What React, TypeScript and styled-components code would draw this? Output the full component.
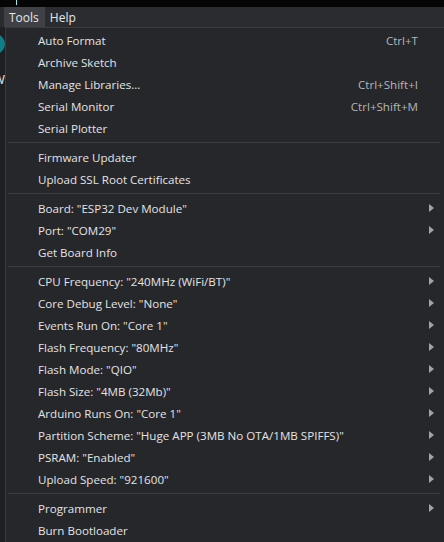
import React from "react";
import styled, { createGlobalStyle } from "styled-components";

const GlobalStyle = createGlobalStyle`
  html, body {
    margin: 0;
    padding: 0;
    background: #1e1f22;
    overflow: hidden;
  }
  body {
    font-family: "Segoe UI", "Open Sans", "Noto Sans", sans-serif;
  }
`;

const Screen = styled.div`
  width: 444px;
  height: 542px;
  display: flex;
  flex-direction: column;
  overflow: hidden;
`;

const TitleStrip = styled.div`
  height: 7px;
  background: #050505;
  display: flex;
  padding-left: 16px;
`;

const Caret = styled.span`
  width: 1px;
  height: 5px;
  background: #9fe7f0;
`;

const MenuBar = styled.div`
  height: 20px;
  background: #2b2c30;
  display: flex;
  align-items: stretch;
  padding-left: 4px;
`;

const BarItem = styled.div<{ $active?: boolean }>`
  display: flex;
  align-items: center;
  padding: 0 6px 0 5px;
  font-size: 12px;
  color: #e6e6e6;
  background: ${(p) => (p.$active ? "#3f4146" : "transparent")};
`;

const Body = styled.div`
  flex: 1;
  display: flex;
  min-height: 0;
`;

const Editor = styled.div`
  width: 5px;
  background: #1e1f22;
  overflow: hidden;
  display: flex;
  flex-direction: column;
`;

const RunButton = styled.div`
  width: 20px;
  height: 20px;
  border-radius: 50%;
  background: #0f7e86;
  margin: 7px 0 0 -15px;
  flex-shrink: 0;
`;

const EditorGlyph = styled.span`
  margin: 18px 0 0 -7px;
  font-size: 13px;
  color: #e8e8e8;
  line-height: 14px;
`;

const Menu = styled.div`
  flex: 1;
  background: #26272b;
  border-left: 1px solid #3a3c41;
  border-top: 1px solid #3a3c41;
  padding-top: 1px;
  display: flex;
  flex-direction: column;
`;

const Row = styled.div`
  height: 22px;
  display: grid;
  grid-template-columns: 1fr auto 26px;
  align-items: center;
  padding-left: 32px;
  font-size: 11.6px;
  color: #e3e3e3;
  white-space: nowrap;
`;

const Shortcut = styled.span`
  color: #b4b6ba;
  font-size: 11.6px;
`;

const Arrow = styled.span`
  justify-self: start;
  margin-left: 11px;
  width: 0;
  height: 0;
  border-top: 4px solid transparent;
  border-bottom: 4px solid transparent;
  border-left: 5px solid #a2a4a8;
`;

const Separator = styled.div`
  height: 1px;
  background: #3b3d42;
  margin: 3px 4px 3px 2px;
`;

type Item = { label: string; shortcut?: string; sub?: boolean } | "sep";

const items: Item[] = [
  { label: "Auto Format", shortcut: "Ctrl+T" },
  { label: "Archive Sketch" },
  { label: "Manage Libraries...", shortcut: "Ctrl+Shift+I" },
  { label: "Serial Monitor", shortcut: "Ctrl+Shift+M" },
  { label: "Serial Plotter" },
  "sep",
  { label: "Firmware Updater" },
  { label: "Upload SSL Root Certificates" },
  "sep",
  { label: 'Board: "ESP32 Dev Module"', sub: true },
  { label: 'Port: "COM29"', sub: true },
  { label: "Get Board Info" },
  "sep",
  { label: 'CPU Frequency: "240MHz (WiFi/BT)"', sub: true },
  { label: 'Core Debug Level: "None"', sub: true },
  { label: 'Events Run On: "Core 1"', sub: true },
  { label: 'Flash Frequency: "80MHz"', sub: true },
  { label: 'Flash Mode: "QIO"', sub: true },
  { label: 'Flash Size: "4MB (32Mb)"', sub: true },
  { label: 'Arduino Runs On: "Core 1"', sub: true },
  { label: 'Partition Scheme: "Huge APP (3MB No OTA/1MB SPIFFS)"', sub: true },
  { label: 'PSRAM: "Enabled"', sub: true },
  { label: 'Upload Speed: "921600"', sub: true },
  "sep",
  { label: "Programmer", sub: true },
  { label: "Burn Bootloader" },
];

const App = () => {
  return (
    <Screen>
      <GlobalStyle />
      <TitleStrip>
        <Caret />
      </TitleStrip>
      <MenuBar>
        <BarItem $active>Tools</BarItem>
        <BarItem>Help</BarItem>
      </MenuBar>
      <Body>
        <Editor>
          <RunButton />
          <EditorGlyph>W</EditorGlyph>
        </Editor>
        <Menu>
          {items.map((item, i) =>
            item === "sep" ? (
              <Separator key={i} />
            ) : (
              <Row key={i}>
                <span>{item.label}</span>
                <Shortcut>{item.shortcut}</Shortcut>
                {item.sub ? <Arrow /> : <span />}
              </Row>
            )
          )}
        </Menu>
      </Body>
    </Screen>
  );
};

export default App;
